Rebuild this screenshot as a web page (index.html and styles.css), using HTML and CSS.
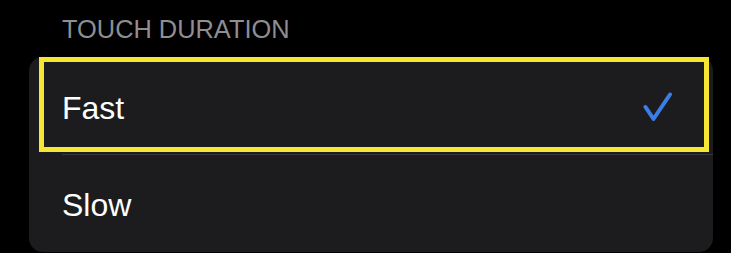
FILE: index.html
```html
<!DOCTYPE html>
<html lang="en">
<head>
<meta charset="utf-8">
<link rel="stylesheet" href="styles.css">
<title>Touch Duration</title>
</head>
<body>
<div class="screen">
  <div class="section-header">TOUCH DURATION</div>
  <div class="card">
    <div class="row row-selected">
      <span class="label">Fast</span>
      <svg class="check" width="30" height="30" viewBox="0 0 30 30" aria-hidden="true">
        <polyline points="3.5,15 11.5,27 28,2.5" fill="none" stroke="#3b7fe6" stroke-width="4" stroke-linecap="round" stroke-linejoin="round"/>
      </svg>
    </div>
    <div class="separator"></div>
    <div class="row row-plain">
      <span class="label">Slow</span>
    </div>
  </div>
</div>
</body>
</html>
```

FILE: styles.css
```css
html, body {
  margin: 0;
  padding: 0;
  background: #000;
}

.screen {
  width: 731px;
  height: 253px;
  overflow: hidden;
  font-family: "Liberation Sans", Arial, sans-serif;
}

.section-header {
  padding: 14px 0 0 62px;
  height: 57px;
  box-sizing: border-box;
  font-size: 25.4px;
  line-height: 30px;
  color: #8e8e93;
}

.card {
  margin: 0 18px 0 29px;
  background: #1c1c1e;
  border-radius: 14px;
  display: flex;
  flex-direction: column;
}

.row {
  display: flex;
  align-items: center;
  justify-content: space-between;
}

.label {
  font-size: 32px;
  line-height: 38px;
  color: #fff;
}

.row-selected {
  margin: 0 4px 0 10px;
  border: 5px solid #f5e634;
  padding: 26px 32px 20px 18px;
  height: 95px;
  box-sizing: border-box;
  background: #1c1c1e;
}

.check {
  display: block;
  margin-top: -1px;
}

.separator {
  margin: 2px 0 0 33px;
  height: 1px;
  background: #38383b;
}

.row-plain {
  padding: 31px 33px 28px 33px;
}
```
